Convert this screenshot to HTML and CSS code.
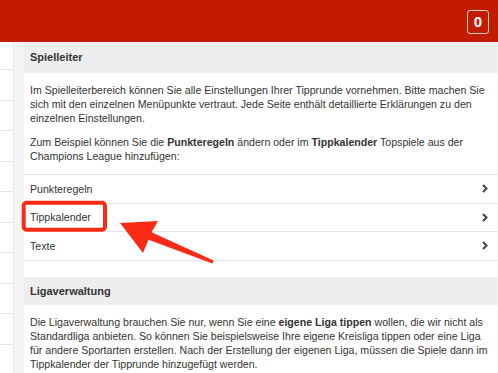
FILE: index.html
```html
<!DOCTYPE html>
<html lang="de">
<head>
    <meta charset="UTF-8">
    <meta name="viewport" content="width=device-width, initial-scale=1.0">
    <title>Spielleiter</title>
    <link rel="stylesheet" href="styles.css">
</head>
<body>
    <header class="topbar">
        <span class="badge">0</span>
    </header>

    <div class="layout">
        <!-- Sidebar (mostly cut off) -->
        <nav class="sidebar">
            <div class="side-item first"></div>
            <div class="side-item"></div>
            <div class="side-item"></div>
            <div class="side-item"></div>
            <div class="side-item"></div>
            <div class="side-item"></div>
            <div class="side-item"></div>
            <div class="side-item"></div>
            <div class="side-item"></div>
            <div class="side-item"></div>
        </nav>

        <main class="content">
            <section class="panel">
                <h2 class="panel-title">Spielleiter</h2>
                <div class="panel-body">
                    <p>Im Spielleiterbereich können Sie alle Einstellungen Ihrer Tipprunde vornehmen. Bitte machen Sie sich mit den einzelnen Menüpunkte vertraut. Jede Seite enthält detaillierte Erklärungen zu den einzelnen Einstellungen.</p>
                    <p>Zum Beispiel können Sie die <b>Punkteregeln</b> ändern oder im <b>Tippkalender</b> Topspiele aus der Champions League hinzufügen:</p>
                </div>
                <ul class="menu">
                    <li class="menu-item">Punkteregeln
                        <svg class="chevron" width="6" height="9" viewBox="0 0 6 9"><polyline points="1,1 4.5,4.5 1,8" /></svg>
                    </li>
                    <li class="menu-item">Tippkalender
                        <svg class="chevron" width="6" height="9" viewBox="0 0 6 9"><polyline points="1,1 4.5,4.5 1,8" /></svg>
                    </li>
                    <li class="menu-item">Texte
                        <svg class="chevron" width="6" height="9" viewBox="0 0 6 9"><polyline points="1,1 4.5,4.5 1,8" /></svg>
                    </li>
                </ul>
            </section>

            <section class="panel panel-second">
                <h2 class="panel-title small">Ligaverwaltung</h2>
                <div class="panel-body">
                    <p>Die Ligaverwaltung brauchen Sie nur, wenn Sie eine <b>eigene Liga tippen</b> wollen, die wir nicht als Standardliga anbieten. So können Sie beispielsweise Ihre eigene Kreisliga tippen oder eine Liga für andere Sportarten erstellen. Nach der Erstellung der eigenen Liga, müssen die Spiele dann im Tippkalender der Tipprunde hinzugefügt werden.</p>
                </div>
            </section>
        </main>
    </div>

    <!-- Screenshot annotation on top of the page -->
    <svg class="annotation" width="498" height="373" viewBox="0 0 498 373">
        <rect x="23.7" y="202.7" width="81.3" height="27" rx="3" />
        <polygon points="120,223 158,221 151.5,232.3 213.6,260.6 212.4,263.4 148.5,239.7 143,253" />
    </svg>
</body>
</html>
```

FILE: styles.css
```css
body {
    margin: 0;
    font-family: "Liberation Sans", Arial, sans-serif;
    font-size: 10.6px;
    color: #333;
    background: #fff;
    position: relative;
    overflow: hidden;
}
.topbar {
    height: 42px;
    background-color: #c21b00;
    display: flex;
    justify-content: flex-end;
    align-items: center;
    padding-right: 9px;
}
.badge {
    width: 20px;
    height: 22px;
    border: 1.5px solid #f4d0c8;
    border-radius: 3px;
    color: #fff;
    font-weight: bold;
    font-size: 15px;
    display: flex;
    align-items: center;
    justify-content: center;
    margin-top: 1px;
}
.layout {
    display: flex;
    background: #f4f4f4;
    min-height: 331px;
}
.sidebar {
    width: 13px;
    background: #fff;
    border-right: 1px solid #ececec;
}
.side-item {
    height: 30.5px;
    border-bottom: 1px solid #e6e6e6;
    box-sizing: border-box;
}
.side-item.first {
    height: 28px;
}
.content {
    flex: 1;
    margin-left: 10px;
    margin-right: 1px;
    background: #fff;
}
.panel-title {
    margin: 0;
    height: 31px;
    line-height: 31px;
    padding: 0 6px;
    background: #eeeeee;
    font-size: 11px;
    font-weight: bold;
    color: #333;
}
.panel-title.small {
    height: 28px;
    line-height: 29px;
}
.panel-body {
    padding: 10px 5px 11px 6px;
}
.panel-body p {
    margin: 0 0 10px;
    line-height: 14px;
}
.panel-body p:last-child {
    margin-bottom: 0;
}
.menu {
    list-style: none;
    margin: 0;
    padding: 0;
    border-top: 1px solid #e3e3e3;
}
.menu-item {
    height: 27.5px;
    line-height: 28px;
    padding: 0 9px 0 6px;
    border-bottom: 1px solid #e3e3e3;
    display: flex;
    justify-content: space-between;
    align-items: center;
}
.chevron polyline {
    fill: none;
    stroke: #444;
    stroke-width: 2;
}
.panel-second {
    margin-top: 16px;
}
.annotation {
    position: absolute;
    left: 0;
    top: 0;
    pointer-events: none;
}
.annotation rect {
    fill: none;
    stroke: #fb2a17;
    stroke-width: 4;
}
.annotation polygon {
    fill: #fb2a17;
}
```
